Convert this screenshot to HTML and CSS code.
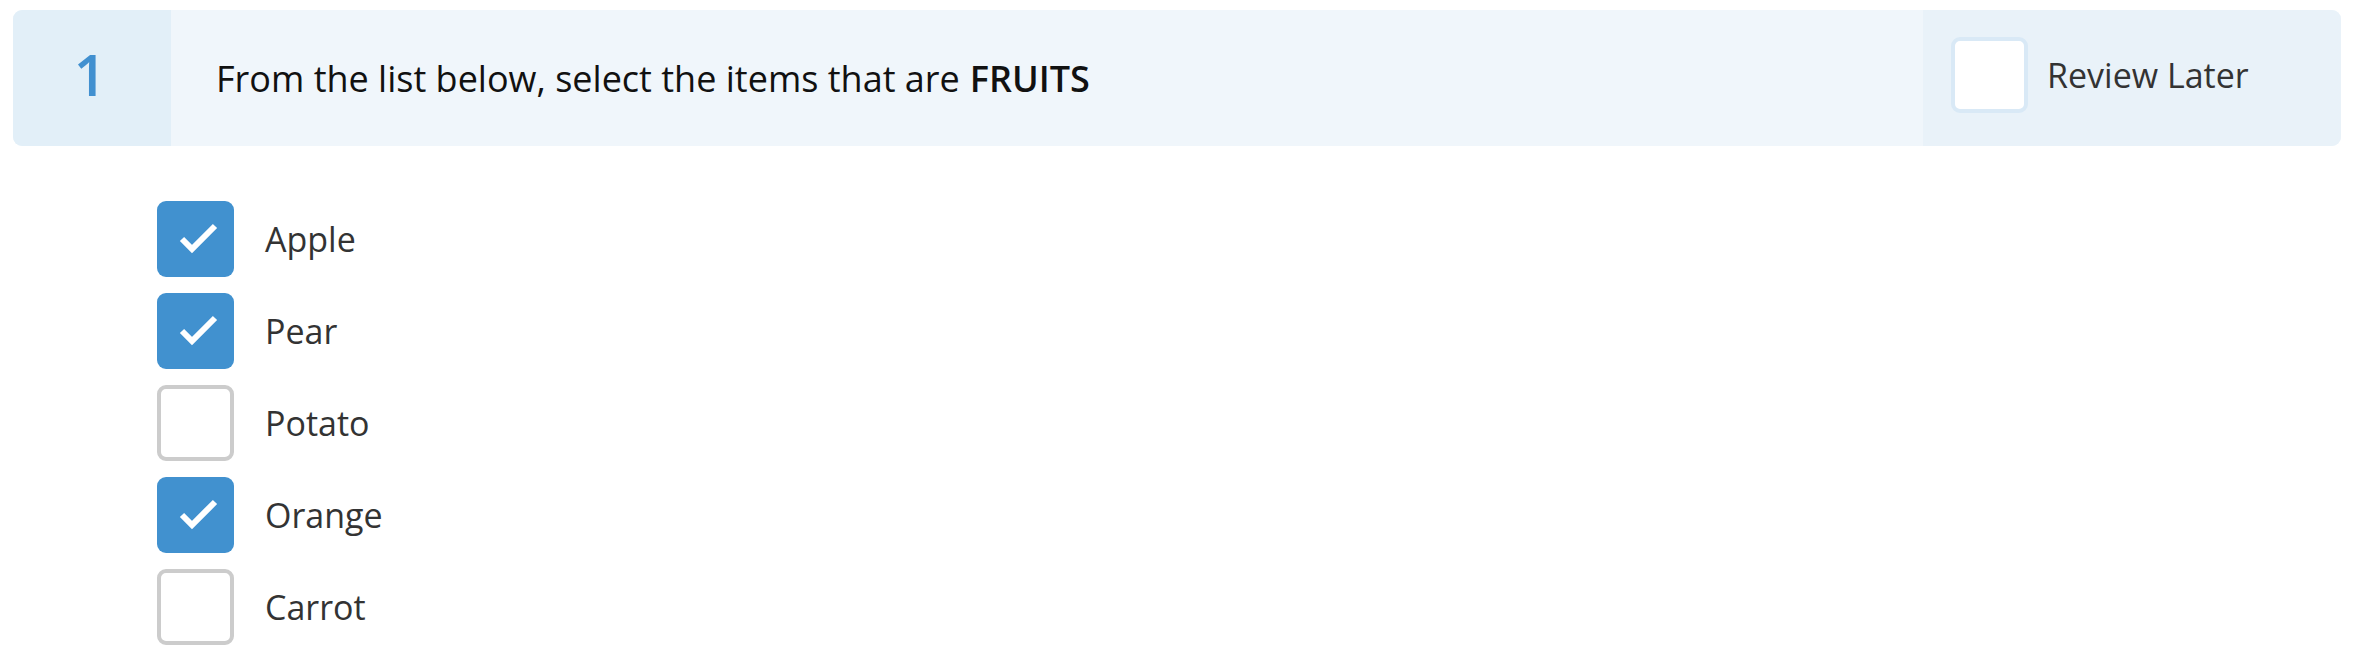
FILE: index.html
```html
<!DOCTYPE html>
<html lang="en">
<head>
<meta charset="utf-8">
<title>Question 1</title>
<link rel="stylesheet" href="styles.css">
</head>
<body>
<div class="question">
  <div class="q-head">
    <div class="q-num">1</div>
    <div class="q-text">From the list below, select the items that are <strong>FRUITS</strong></div>
    <div class="q-review">
      <span class="review-box"></span>
      <span class="review-label">Review Later</span>
    </div>
  </div>
  <ul class="options">
    <li class="option"><span class="box checked"><svg viewBox="0 0 76 76" width="76" height="76"><polyline points="24,38 34,48 57,25" fill="none" stroke="#fff" stroke-width="6"/></svg></span><span class="opt-label">Apple</span></li>
    <li class="option"><span class="box checked"><svg viewBox="0 0 76 76" width="76" height="76"><polyline points="24,38 34,48 57,25" fill="none" stroke="#fff" stroke-width="6"/></svg></span><span class="opt-label">Pear</span></li>
    <li class="option"><span class="box"></span><span class="opt-label">Potato</span></li>
    <li class="option"><span class="box checked"><svg viewBox="0 0 76 76" width="76" height="76"><polyline points="24,38 34,48 57,25" fill="none" stroke="#fff" stroke-width="6"/></svg></span><span class="opt-label">Orange</span></li>
    <li class="option"><span class="box"></span><span class="opt-label">Carrot</span></li>
  </ul>
</div>
</body>
</html>
```

FILE: styles.css
```css
* { box-sizing: border-box; }
html, body { margin: 0; padding: 0; background: #fff; }
body {
  font-family: "Open Sans", "Noto Sans", sans-serif;
  padding: 10px 15px 0 13px;
}
.q-head {
  display: flex;
  height: 136px;
  border-radius: 9px;
  overflow: hidden;
  background: #f0f6fb;
}
.q-num {
  width: 158px;
  flex: none;
  background: #e2eff8;
  color: #4190d0;
  font-size: 57px;
  font-weight: 600;
  display: flex;
  align-items: center;
  justify-content: center;
  padding-bottom: 8px;
  padding-right: 4px;
}
.q-text {
  flex: 1;
  display: flex;
  align-items: center;
  padding-left: 45px;
  font-size: 36px;
  color: #111;
}
.q-text strong { font-weight: 600; margin-left: 0.28em; }
.q-review {
  width: 418px;
  flex: none;
  background: #e9f2f9;
  display: flex;
  align-items: flex-start;
  padding: 27px 0 0 28px;
}
.review-box {
  width: 77px;
  height: 76px;
  background: #fff;
  border: 4px solid #d9e9f6;
  border-radius: 9px;
  flex: none;
}
.review-label {
  font-size: 34px;
  color: #333;
  margin-left: 19px;
  line-height: 76px;
}
.options {
  list-style: none;
  margin: 55px 0 0 144px;
  padding: 0;
  display: flex;
  flex-direction: column;
  gap: 16px;
}
.option {
  display: flex;
  align-items: center;
  height: 76px;
}
.box {
  width: 77px;
  height: 76px;
  flex: none;
  border: 4px solid #cccccc;
  border-radius: 9px;
  background: #fff;
  display: flex;
  align-items: center;
  justify-content: center;
}
.box.checked {
  border: none;
  background: #4191cf;
}
.box svg { display: block; }
.opt-label {
  font-size: 34px;
  color: #333;
  margin-left: 31px;
}
```
